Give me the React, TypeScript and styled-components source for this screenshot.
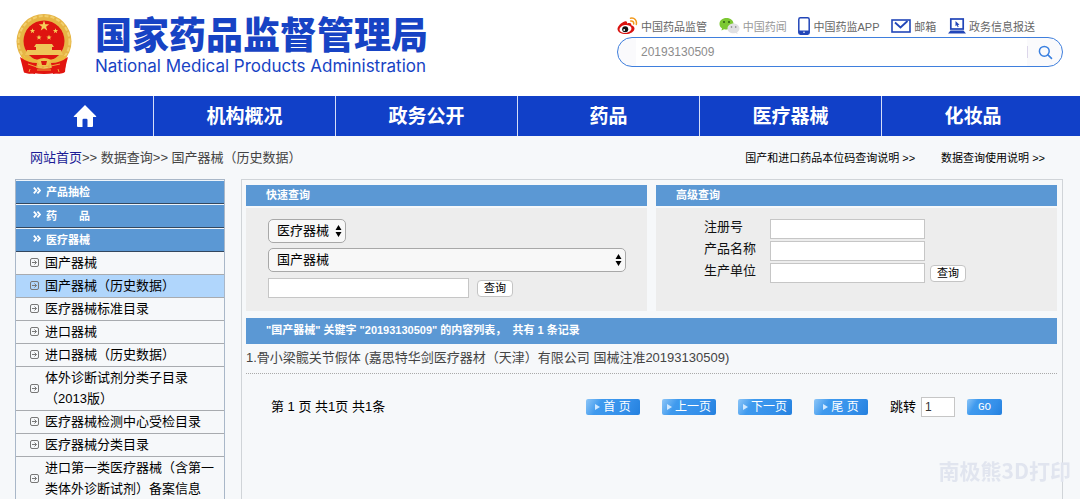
import React from "react";
import styled, { createGlobalStyle } from "styled-components";

const sans = `"Liberation Sans", "Noto Sans CJK SC", sans-serif`;
const blue = "#5b98d4";

const GlobalStyle = createGlobalStyle`
  *, *::before, *::after { box-sizing: border-box; }
  html { scrollbar-width: none; }
  body { margin: 0; background: #f6f8fa; color: #111; font-family: ${sans}; font-size: 13px; }
  a { color: inherit; text-decoration: none; }
  h1, h2, p, ul { margin: 0; padding: 0; }
  ul { list-style: none; }
  button, input, select { font-family: inherit; margin: 0; }
  svg { display: block; flex: none; }
`;

const Page = styled.div`
  display: flex;
  flex-direction: column;
  min-height: 100vh;
  position: relative;
`;

const Header = styled.header`
  display: flex;
  justify-content: space-between;
  height: 96px;
  padding: 13px 17px 0 15px;
  background: #fff;
`;

const Brand = styled.a`
  display: flex;
  gap: 22px;
  color: #1743c4;
`;

const BrandText = styled.div`
  padding-top: 4px;
`;

const BrandTitle = styled.h1`
  font-size: 37px;
  line-height: 40px;
  font-weight: 900;
  white-space: nowrap;
`;

const BrandSub = styled.p`
  font-family: Inter, sans-serif;
  font-size: 17px;
  line-height: 18px;
  white-space: nowrap;
`;

const Tools = styled.div`
  width: 446px;
`;

const QuickLinks = styled.ul`
  display: flex;
  justify-content: space-between;
  height: 24px;
  padding: 2px 28px 0 0;
`;

const QuickLink = styled.a<{ $pale?: boolean }>`
  display: flex;
  align-items: center;
  gap: 3px;
  height: 22px;
  font-size: 11px;
  white-space: nowrap;
  color: ${(p) => (p.$pale ? "#999" : "#666")};
`;

const SearchBox = styled.form`
  display: flex;
  align-items: stretch;
  height: 30px;
  padding: 0 9px 0 18px;
  border: 1px solid #3f7fdd;
  border-radius: 15px;
  background: #fafafc;
  overflow: hidden;
`;

const SearchInput = styled.input`
  flex: 1;
  min-width: 0;
  border: 0;
  padding: 0 5px;
  background: #fff;
  color: #8c8c8c;
  font-size: 12px;
  outline: none;
`;

const SearchButton = styled.button`
  display: flex;
  align-items: center;
  gap: 10px;
  border: 0;
  padding: 0;
  background: none;

  &::before {
    content: "";
    width: 1px;
    height: 12px;
    background: #dcd6ea;
  }
`;

const Nav = styled.nav`
  display: grid;
  grid-template-columns: 138fr repeat(5, 182fr);
  height: 40px;
  padding: 0 16px;
  background: #1140c8;
`;

const NavItem = styled.a`
  display: flex;
  align-items: center;
  justify-content: center;
  padding-bottom: 3px;
  color: #fff;
  font-size: 19px;
  font-weight: 700;
  border-right: 1px solid #d5def8;

  svg { margin-top: 3px; }
  &:last-child { border-right: 0; }
`;

const Crumbs = styled.div`
  display: flex;
  justify-content: space-between;
  align-items: center;
  height: 43px;
  padding: 0 35px 2px 30px;
  color: #444;
`;

const HomeLink = styled.a`
  && { color: #1c1c96; }
`;

const HelpLinks = styled.div`
  display: flex;
  gap: 26px;
  font-size: 11px;
  color: #000;
`;

const Body = styled.div`
  display: flex;
  flex: 1;
  gap: 16px;
  padding: 0 17px 0 15px;
`;

const Sidebar = styled.aside`
  flex: none;
  width: 210px;
  border: 1px solid #a9b7c8;
`;

const Category = styled.a`
  display: flex;
  align-items: center;
  gap: 5px;
  height: 24px;
  padding: 0 0 3px 17px;
  border-top: 1px solid #eef4fa;
  border-bottom: 1px solid #33475e;
  background: ${blue};
  color: #fff;
  font-size: 11px;
  font-weight: 700;
`;

const Entry = styled.a<{ $active?: boolean }>`
  display: flex;
  align-items: center;
  gap: 6px;
  padding: 0 2px 1px 14px;
  border-bottom: 1px solid #a8abaf;
  background: ${(p) => (p.$active ? "#b0d6fc" : "transparent")};
  line-height: 21px;
  color: #000;
`;

const Main = styled.main`
  flex: 1;
  min-width: 0;
  padding: 5px 5px 0 4px;
  border: 1px solid #d0d4d8;
`;

const Panels = styled.div`
  display: flex;
  gap: 9px;
`;

const Panel = styled.section`
  flex: 1;
  min-width: 0;
  display: flex;
  flex-direction: column;
  gap: 2px;
`;

const Bar = styled.h2<{ $tall?: boolean }>`
  height: ${(p) => (p.$tall ? 26 : 21)}px;
  line-height: ${(p) => (p.$tall ? 24 : 20)}px;
  padding-left: 20px;
  background: ${blue};
  color: #fff;
  font-size: 11px;
  font-weight: 700;
  white-space: pre;
`;

const QuickForm = styled.form`
  display: flex;
  flex-direction: column;
  align-items: flex-start;
  gap: 5px;
  height: 103px;
  padding: 11px 21px 0 22px;
  background: #ededed;
`;

const AdvancedForm = styled.form`
  display: grid;
  grid-template-columns: 66px 155px auto;
  grid-auto-rows: 20px;
  row-gap: 2px;
  align-items: center;
  height: 103px;
  padding: 11px 0 0 48px;
  background: #ededed;
  align-content: start;

  label { line-height: 16px; padding-bottom: 4px; }
`;

const SelectWrap = styled.div<{ $wide?: boolean }>`
  display: flex;
  align-items: center;
  position: relative;
  width: ${(p) => (p.$wide ? "100%" : "78px")};

  svg {
    position: absolute;
    right: 4px;
    pointer-events: none;
  }
`;

const Select = styled.select`
  appearance: none;
  width: 100%;
  height: 24px;
  padding: 0 0 2px 8px;
  border: 1px solid #a8a8a8;
  border-radius: 5px;
  background: #f8f8f8;
  color: #000;
  font-size: 13px;
`;

const FieldLine = styled.div`
  display: flex;
  align-items: center;
  gap: 8px;
  padding-top: 1px;
`;

const TextBox = styled.input<{ $size: "short" | "medium" | "long" }>`
  width: ${(p) => ({ short: 34, medium: 155, long: 201 })[p.$size]}px;
  height: 20px;
  padding: 0 3px;
  border: 1px solid #c6c6c6;
  background: #fff;
  color: #333;
  font-size: 12px;
`;

const SmallButton = styled.button`
  width: 36px;
  height: 17px;
  padding: 0;
  border: 1px solid #c4c4c4;
  border-radius: 4px;
  background: #fff;
  color: #000;
  font-size: 11px;
  line-height: 15px;
`;

const AdvancedSubmit = styled(SmallButton)`
  grid-column: 3;
  margin-left: 5px;
`;

const Results = styled.section`
  padding-top: 7px;
`;

const ResultRow = styled.a`
  display: block;
  height: 30px;
  line-height: 28px;
  border-bottom: 1px dotted #aaa;
  color: #444;
  white-space: nowrap;
`;

const Pager = styled.form`
  display: flex;
  align-items: center;
  gap: 22px;
  padding: 22px 55px 0 25px;
  color: #000;
`;

const PagerInfo = styled.p`
  margin-right: auto;
  padding-bottom: 3px;
`;

const PagerButton = styled.button<{ $go?: boolean }>`
  display: flex;
  align-items: center;
  justify-content: center;
  gap: 3px;
  width: ${(p) => (p.$go ? 35 : 54)}px;
  height: 16px;
  padding: 0;
  border: 0;
  border-radius: 2px;
  background: linear-gradient(120deg, #8ec6f7 0%, #3f9aee 26%, #3590ea 70%, #2480de 100%);
  color: #fff;
  font-family: ${(p) => (p.$go ? `"Liberation Mono", monospace` : sans)};
  font-size: ${(p) => (p.$go ? 11 : 12)}px;
  line-height: 16px;
  white-space: pre;
`;

const JumpGroup = styled.div`
  display: flex;
  align-items: center;
  gap: 5px;

  label { padding-bottom: 3px; }
`;

const JumpSet = styled.div`
  display: flex;
  align-items: center;
  gap: 12px;
`;

const Watermark = styled.div`
  position: fixed;
  right: 9px;
  bottom: 15px;
  color: #e1e5ef;
  font-family: "Noto Sans CJK SC", sans-serif;
  font-size: 21px;
  line-height: 28px;
  font-weight: 700;
  pointer-events: none;
`;

const star = (cx: number, cy: number, r: number) =>
  Array.from({ length: 10 }, (_, i) => {
    const a = -Math.PI / 2 + (i * Math.PI) / 5;
    const k = i % 2 ? r * 0.4 : r;
    return `${(cx + k * Math.cos(a)).toFixed(2)},${(cy + k * Math.sin(a)).toFixed(2)}`;
  }).join(" ");

const Emblem = () => (
  <svg width="58" height="62" viewBox="0 0 58 62" aria-hidden="true">
    <path d="M7 38 L9 59 Q13 62 18 60 Q29 62 40 60 Q46 62 50 59 L52 38Z" fill="#e2150f" />
    <circle cx="29" cy="28.500" r="27.500" fill="#e6b545" />
    <circle cx="29" cy="28.500" r="25.500" fill="none" stroke="#f2cf6c" strokeWidth="2" strokeDasharray="4 2" />
    <circle cx="29" cy="28" r="20.500" fill="#de1410" />
    <polygon points={star(29, 13, 5.5)} fill="#f6cf58" />
    <polygon points={star(17.5, 18, 2.8)} fill="#f6cf58" />
    <polygon points={star(40.5, 18, 2.8)} fill="#f6cf58" />
    <polygon points={star(24, 24.5, 2.8)} fill="#f6cf58" />
    <polygon points={star(34, 24.5, 2.8)} fill="#f6cf58" />
    <path d="M21 31h16l2 3h-2v3h9l2 5H10l2-5h9v-3h-2z" fill="#efc558" />
    <path d="M6 42Q17 47 29 47T52 42L49 50Q39 46 29 53Q19 46 9 50Z" fill="#ecb83c" />
    <path d="M5 44q8 6 17 6l-2 11-11-1.500zM53 44q-8 6-17 6l2 11 11-1.500z" fill="#e2150f" />
    <path d="M22 47q7-4 14 0l-3 6h-8z" fill="#f0c24a" />
    <path d="M26 48h6l-1 4h-4z" fill="#d9190f" />
    <path d="M13 51q8 4 16 3t16-3M22 57h14M15 56l-1 3M43 56l1 3" stroke="#f0a83c" fill="none" />
  </svg>
);

const WeiboIcon = () => (
  <svg width="21" height="18" viewBox="0 0 21 18" aria-hidden="true">
    <path d="M7.500 4.500c1.600-.8 3 0 2.600 2 2.500-1 4.600-.5 4.200 1.800 2 .6 3.200 1.800 3.200 3.200 0 3-4 5.600-8.700 5.600S.5 15.100.5 12.100c0-2.800 4-6.600 7-7.600z" fill="#d9120f" />
    <ellipse cx="8.500" cy="12" rx="6" ry="3.900" fill="#fff" transform="rotate(-6 8.500 12)" />
    <circle cx="8.200" cy="12.200" r="3" fill="#111" />
    <circle cx="7.200" cy="13" r=".9" fill="#fff" />
    <path d="M13.500 1.200c4-.8 6.600 2 5.800 6.200M13.700 4c2-.3 3.300.9 3 3" fill="none" stroke="#f29a1c" strokeWidth="1.500" strokeLinecap="round" />
  </svg>
);

const WechatIcon = () => (
  <svg width="21" height="18" viewBox="0 0 21 18" aria-hidden="true">
    <path d="M7.500 1C3.400 1 .5 3.600.5 6.900c0 1.800.9 3.300 2.500 4.400L2.500 13.500l2.600-1.300c.8.200 1.600.3 2.400.3 4.100 0 7-2.500 7-5.700S11.600 1 7.500 1z" fill="#7cc832" />
    <circle cx="5" cy="5" r="1" fill="#2d5c12" />
    <circle cx="10" cy="5" r="1" fill="#2d5c12" />
    <path d="M14.500 6.500c-3.500 0-6 2.200-6 4.900s2.500 4.900 6 4.900c.7 0 1.400-.1 2-.3l2.200 1.100-.6-1.900c1.500-.9 2.400-2.300 2.400-3.800 0-2.700-2.500-4.900-6-4.900z" fill="#e0e0e2" />
    <circle cx="12.500" cy="10" r=".8" fill="#777" />
    <circle cx="16.700" cy="10" r=".8" fill="#777" />
  </svg>
);

const PhoneIcon = () => (
  <svg width="12" height="18" viewBox="0 0 12 18" aria-hidden="true">
    <rect x=".8" y=".8" width="10.400" height="16.400" rx="1.600" fill="#fff" stroke="#2246b8" strokeWidth="1.500" />
    <path d="M1 13.500h10V16q0 1-1 1H2q-1 0-1-1z" fill="#2246b8" />
    <circle cx="6" cy="15.300" r=".8" fill="#fff" />
  </svg>
);

const MailIcon = () => (
  <svg width="20" height="14" viewBox="0 0 20 14" aria-hidden="true">
    <rect x="1" y="1" width="18" height="12" fill="#fff" stroke="#2246b8" strokeWidth="1.600" />
    <path d="M4 3.500l5.500 5L16.500 2" fill="none" stroke="#2246b8" strokeWidth="1.800" />
  </svg>
);

const LaptopIcon = () => (
  <svg width="18" height="16" viewBox="0 0 18 16" aria-hidden="true">
    <rect x="2.800" y="1" width="12.400" height="10" fill="#fff" stroke="#2246b8" strokeWidth="1.700" />
    <path d="M7.500 3l4 3.800-1.700.1.900 1.800-1 .5-.9-1.900-1.300 1z" fill="#2246b8" />
    <path d="M2.500 12.500h13l2.500 3H0z" fill="#2246b8" />
  </svg>
);

const SearchIcon = () => (
  <svg width="15" height="15" viewBox="0 0 15 15" aria-hidden="true">
    <circle cx="6.300" cy="6.300" r="4.900" fill="none" stroke="#3b80e0" strokeWidth="1.500" />
    <path d="M9.900 9.900l3.600 3.500" stroke="#3b80e0" strokeWidth="1.600" strokeLinecap="round" />
  </svg>
);

const HomeIcon = () => (
  <svg width="24" height="24" viewBox="0 0 24 24" aria-hidden="true">
    <path d="M12 1L.8 12.200q-.5.800.6.800H4v9q0 1 1 1h4.500v-7q0-1.200 1.200-1.200h2.600q1.200 0 1.200 1.200v7H19q1 0 1-1v-9h2.600q1.100 0 .6-.8L12 1z" fill="#fff" />
  </svg>
);

const EntryIcon = () => (
  <svg width="9" height="9" viewBox="0 0 9 9" aria-hidden="true">
    <rect x=".5" y=".5" width="8" height="8" rx="1.500" fill="none" stroke="#777" />
    <path d="M2 4.500h4.500M4.500 2.500l2 2-2 2" fill="none" stroke="#777" />
  </svg>
);

const CategoryIcon = () => (
  <svg width="8" height="7" viewBox="0 0 8 7" aria-hidden="true">
    <path d="M.8.6l2.600 2.900L.8 6.400M4.400.6L7 3.500 4.400 6.400" fill="none" stroke="#fff" strokeWidth="1.800" />
  </svg>
);

const SelectArrows = () => (
  <svg width="7" height="12" viewBox="0 0 7 12" aria-hidden="true">
    <path d="M3.500 0l3 5h-6zM3.500 12l3-5h-6z" fill="#000" />
  </svg>
);

const PlayIcon = () => (
  <svg width="5" height="6" viewBox="0 0 5 6" aria-hidden="true">
    <path d="M0 0l5 3-5 3z" fill="#cfe8ff" />
  </svg>
);

const quickLinks = [
  { label: "中国药品监管", Icon: WeiboIcon },
  { label: "中国药闻", Icon: WechatIcon, pale: true },
  { label: "中国药监APP", Icon: PhoneIcon },
  { label: "邮箱", Icon: MailIcon },
  { label: "政务信息报送", Icon: LaptopIcon },
];

const navItems = ["机构概况", "政务公开", "药品", "医疗器械", "化妆品"];
const categories = ["产品抽检", "药\u3000\u3000品", "医疗器械"];
const entries = [
  "国产器械",
  "国产器械（历史数据）",
  "医疗器械标准目录",
  "进口器械",
  "进口器械（历史数据）",
  "体外诊断试剂分类子目录（2013版）",
  "医疗器械检测中心受检目录",
  "医疗器械分类目录",
  "进口第一类医疗器械（含第一类体外诊断试剂）备案信息",
];
const advancedFields = [
  { id: "reg-no", label: "注册号" },
  { id: "product", label: "产品名称" },
  { id: "maker", label: "生产单位" },
];

export default function App() {
  return (
    <Page>
      <GlobalStyle />
      <Header>
        <Brand href="#">
          <Emblem />
          <BrandText>
            <BrandTitle>国家药品监督管理局</BrandTitle>
            <BrandSub>National Medical Products Administration</BrandSub>
          </BrandText>
        </Brand>
        <Tools>
          <QuickLinks>
            {quickLinks.map(({ label, Icon, pale }) => (
              <li key={label}>
                <QuickLink href="#" $pale={pale}>
                  <Icon />
                  {label}
                </QuickLink>
              </li>
            ))}
          </QuickLinks>
          <SearchBox>
            <SearchInput aria-label="搜索" defaultValue="20193130509" />
            <SearchButton type="button" aria-label="搜索">
              <SearchIcon />
            </SearchButton>
          </SearchBox>
        </Tools>
      </Header>
      <Nav>
        <NavItem href="#" aria-label="首页">
          <HomeIcon />
        </NavItem>
        {navItems.map((label) => (
          <NavItem href="#" key={label}>
            {label}
          </NavItem>
        ))}
      </Nav>
      <Crumbs>
        <p>
          <HomeLink href="#">网站首页</HomeLink>&gt;&gt; <a href="#">数据查询</a>&gt;&gt; 国产器械（历史数据）
        </p>
        <HelpLinks>
          <a href="#">国产和进口药品本位码查询说明 &gt;&gt;</a>
          <a href="#">数据查询使用说明 &gt;&gt;</a>
        </HelpLinks>
      </Crumbs>
      <Body>
        <Sidebar>
          {categories.map((label) => (
            <Category href="#" key={label}>
              <CategoryIcon />
              {label}
            </Category>
          ))}
          <ul>
            {entries.map((label, i) => (
              <li key={label}>
                <Entry href="#" $active={i === 1}>
                  <EntryIcon />
                  <span>{label}</span>
                </Entry>
              </li>
            ))}
          </ul>
        </Sidebar>
        <Main>
          <Panels>
            <Panel>
              <Bar>快速查询</Bar>
              <QuickForm>
                <SelectWrap>
                  <Select aria-label="类别">
                    <option>医疗器械</option>
                  </Select>
                  <SelectArrows />
                </SelectWrap>
                <SelectWrap $wide>
                  <Select aria-label="数据库">
                    <option>国产器械</option>
                  </Select>
                  <SelectArrows />
                </SelectWrap>
                <FieldLine>
                  <TextBox $size="long" aria-label="关键字" />
                  <SmallButton type="button">查询</SmallButton>
                </FieldLine>
              </QuickForm>
            </Panel>
            <Panel>
              <Bar>高级查询</Bar>
              <AdvancedForm>
                {advancedFields.map(({ id, label }, i) => (
                  <React.Fragment key={id}>
                    <label htmlFor={id}>{label}</label>
                    <TextBox id={id} $size="medium" />
                    {i === 2 ? <AdvancedSubmit type="button">查询</AdvancedSubmit> : <span />}
                  </React.Fragment>
                ))}
              </AdvancedForm>
            </Panel>
          </Panels>
          <Results>
            <Bar $tall>{`"国产器械" 关键字 "20193130509" 的内容列表，  共有 1 条记录`}</Bar>
            <ResultRow href="#">
              1.骨小梁髋关节假体 (嘉思特华剑医疗器材（天津）有限公司 国械注准20193130509)
            </ResultRow>
            <Pager>
              <PagerInfo>第 1 页 共1页 共1条</PagerInfo>
              {["首 页", "上一页", "下一页", "尾 页"].map((label) => (
                <PagerButton type="button" key={label}>
                  <PlayIcon />
                  {label}
                </PagerButton>
              ))}
              <JumpSet>
                <JumpGroup>
                  <label htmlFor="jump">跳转</label>
                  <TextBox id="jump" $size="short" defaultValue="1" />
                </JumpGroup>
                <PagerButton type="button" $go>
                  GO
                </PagerButton>
              </JumpSet>
            </Pager>
          </Results>
        </Main>
      </Body>
      <Watermark>南极熊3D打印</Watermark>
    </Page>
  );
}
